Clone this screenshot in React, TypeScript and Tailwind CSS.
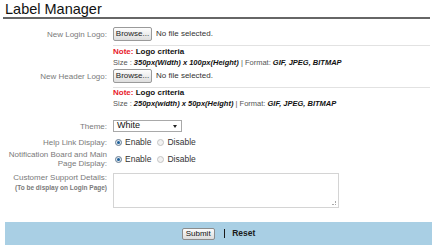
import React from "react";

const label = "text-right text-[8px] leading-[9px] text-[#7a7a7a] pr-[2px]";

function BrowseRow() {
  return (
    <div className="flex h-[14px] items-center gap-[4px]">
      <button className="h-[14px] w-[39px] rounded-[2px] border border-[#9a9a9a] bg-gradient-to-b from-[#fdfdfd] to-[#dedede] text-[8px] leading-[12px] text-[#222]">
        Browse...
      </button>
      <span className="text-[8px] text-[#333]">No file selected.</span>
    </div>
  );
}

function Criteria({ size }: { size: string }) {
  return (
    <div className="leading-[10.5px] text-[#555]">
      <div className="text-[8px]">
        <span className="font-bold text-[#e8202a]">Note:</span>{" "}
        <span className="font-bold text-[#111]">Logo criteria</span>
      </div>
      <div className="text-[7.5px]">
        Size : <span className="font-bold italic text-[#111]">{size}</span> | Format:{" "}
        <span className="font-bold italic text-[#111]">GIF, JPEG, BITMAP</span>
      </div>
    </div>
  );
}

function Radio({ on, text }: { on?: boolean; text: string }) {
  return (
    <span className="flex items-center gap-[3px]">
      <span
        className={
          on
            ? "flex h-[7px] w-[7px] items-center justify-center rounded-full border border-[#6a7e92] bg-[#dfe8f0]"
            : "h-[7px] w-[7px] rounded-full border border-[#c4c4c4] bg-[#f2f2f2]"
        }
      >
        {on && <span className="h-[3px] w-[3px] rounded-full bg-[#1d5f99]" />}
      </span>
      <span className="text-[8.5px] text-[#333]">{text}</span>
    </span>
  );
}

function RadioPair() {
  return (
    <div className="flex items-center gap-[6px] pl-[2px]">
      <Radio on text="Enable" />
      <Radio text="Disable" />
    </div>
  );
}

export default function App() {
  return (
    <div className="h-[250px] w-[434px] bg-white px-[3px] pt-[2px] font-['Liberation_Sans',Arial,sans-serif]">
      <div className="w-[427px] border-b-2 border-[#666]">
        <h1 className="h-[15px] pl-[2px] text-[14.5px] leading-[15px] text-[#111]">Label Manager</h1>
      </div>

      <div className="mt-[8px] grid w-[427px] grid-cols-[106px_1fr] gap-x-[4px]">
        <div className={`${label} flex h-[14px] items-center justify-end`}>New Login Logo:</div>
        <BrowseRow />

        <div />
        <div className="mt-[4px] border-t border-[#e2e2e2] pt-[1px]">
          <Criteria size="350px(Width) x 100px(Height)" />
        </div>

        <div className={`${label} mt-[1px] flex h-[14px] items-center justify-end`}>New Header Logo:</div>
        <div className="mt-[1px]">
          <BrowseRow />
        </div>

        <div />
        <div className="mt-[4px] border-t border-[#e2e2e2] pt-[0px]">
          <Criteria size="250px(width) x 50px(Height)" />
        </div>

        <div className={`${label} mt-[11px] flex h-[12px] items-center justify-end`}>Theme:</div>
        <div className="mt-[11px]">
          <div className="flex h-[12px] w-[69px] items-center justify-between border border-[#a9a9a9] pl-[3px] pr-[4px]">
            <span className="text-[9px] text-[#111]">White</span>
            <span className="h-0 w-0 border-x-[2.5px] border-t-[3px] border-x-transparent border-t-[#222]" />
          </div>
        </div>

        <div className={`${label} mt-[4px] flex h-[12px] items-center justify-end`}>Help Link Display:</div>
        <div className="mt-[4px] flex h-[12px] items-center">
          <RadioPair />
        </div>

        <div className={`${label} mt-[2px] h-[18px]`}>
          Notification Board and Main
          <br />
          Page Display:
        </div>
        <div className="mt-[2px] flex h-[18px] items-center">
          <RadioPair />
        </div>

        <div className={`${label} mt-[5px]`}>
          <div className="leading-[9px]">Customer Support Details:</div>
          <div className="mt-[2px] text-[6.5px] font-bold leading-[8px]">(To be display on Login Page)</div>
        </div>
        <div className="mt-[5px]">
          <div className="relative h-[35px] w-[226px] border border-[#d4d4d4]">
            <span className="absolute bottom-[2px] right-[2px] h-[4px] w-[4px] border-b border-r border-dotted border-[#aaa]" />
          </div>
        </div>
      </div>

      <div className="ml-[2px] mt-[14px] flex h-[23px] w-[427px] items-center justify-center gap-[9px] bg-[#a9cfe4]">
        <button className="h-[12px] w-[33px] rounded-[2px] border border-[#8c8c8c] bg-gradient-to-b from-[#fbfbfb] to-[#dcdcdc] text-[8px] leading-[10px] text-[#111]">
          Submit
        </button>
        <span className="flex items-center gap-[7px] text-[8.5px] font-bold text-[#1a1a1a]">
          <span className="h-[9px] w-[1.5px] bg-[#1a1a1a]" />
          Reset
        </span>
      </div>
    </div>
  );
}
